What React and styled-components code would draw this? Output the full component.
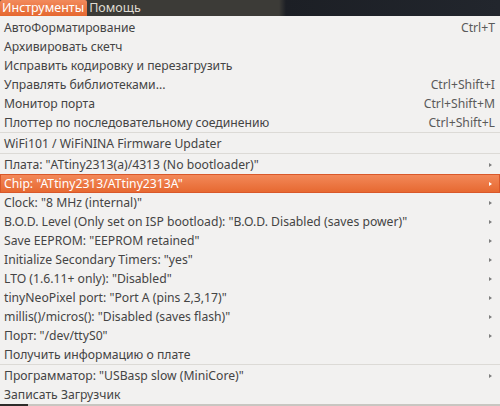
import styled, { createGlobalStyle } from "styled-components";

const GlobalStyle = createGlobalStyle`
  html, body {
    margin: 0;
    padding: 0;
    background: #f2f1f0;
  }
  body {
    width: 500px;
    height: 406px;
    overflow: hidden;
    font-family: "Noto Sans", "Open Sans", sans-serif;
  }
`;

const Screen = styled.div`
  display: flex;
  flex-direction: column;
  width: 500px;
  height: 406px;
`;

const MenuBar = styled.div`
  display: flex;
  height: 16px;
  background: linear-gradient(to right, #3c3b37 0, #3c3b37 279px, #1c1f25 286px, #22262d 100%);
  font-size: 12.5px;
  line-height: 16px;
`;

const BarItem = styled.div`
  padding: 0 3px 0 2px;
  color: ${(p) => (p.$active ? "#ffffff" : "#dfdbd2")};
  background: ${(p) =>
    p.$active ? "linear-gradient(#f28a5c, #e5672f)" : "transparent"};
  border-radius: ${(p) => (p.$active ? "2px 2px 0 0" : "0")};
`;

const Menu = styled.div`
  flex: 1;
  display: flex;
  flex-direction: column;
  padding-top: 2px;
  background: #f2f1f0;
  color: #444444;
  font-size: 12.2px;
`;

const Row = styled.div`
  display: flex;
  align-items: center;
  height: 19px;
  padding: 0 5px 0 4px;
  box-sizing: border-box;
  color: ${(p) => (p.$active ? "#ffffff" : "#444444")};
  background: ${(p) =>
    p.$active ? "linear-gradient(#f38a5b, #e6672f)" : "transparent"};
  box-shadow: ${(p) => (p.$active ? "inset 0 0 0 1px #d9582a" : "none")};
  white-space: nowrap;
`;

const Label = styled.span`
  flex: 1;
`;

const Shortcut = styled.span`
  color: #5a5a5a;
`;

const Arrow = styled.span`
  width: 0;
  height: 0;
  margin-right: 3px;
  border-top: 2.5px solid transparent;
  border-bottom: 2.5px solid transparent;
  border-left: 3px solid ${(p) => (p.$active ? "#ffffff" : "#7d7d7d")};
`;

const Separator = styled.div`
  height: 2px;
  border-top: 1px solid #dcdad6;
  box-sizing: border-box;
`;

const BottomEdge = styled.div`
  height: 2px;
  background: linear-gradient(to right, #2d2c2a 0, #2d2c2a 28px, #c8c6c1 28px);
`;

const groups = [
  [
    { label: "АвтоФорматирование", key: "Ctrl+T" },
    { label: "Архивировать скетч" },
    { label: "Исправить кодировку и перезагрузить" },
    { label: "Управлять библиотеками...", key: "Ctrl+Shift+I" },
    { label: "Монитор порта", key: "Ctrl+Shift+M" },
    { label: "Плоттер по последовательному соединению", key: "Ctrl+Shift+L" },
  ],
  [{ label: "WiFi101 / WiFiNINA Firmware Updater" }],
  [
    { label: 'Плата: "ATtiny2313(a)/4313 (No bootloader)"', sub: true },
    { label: 'Chip: "ATtiny2313/ATtiny2313A"', sub: true, active: true },
    { label: 'Clock: "8 MHz (internal)"', sub: true },
    { label: 'B.O.D. Level (Only set on ISP bootload): "B.O.D. Disabled (saves power)"', sub: true },
    { label: 'Save EEPROM: "EEPROM retained"', sub: true },
    { label: 'Initialize Secondary Timers: "yes"', sub: true },
    { label: 'LTO (1.6.11+ only): "Disabled"', sub: true },
    { label: 'tinyNeoPixel port: "Port A (pins 2,3,17)"', sub: true },
    { label: 'millis()/micros(): "Disabled (saves flash)"', sub: true },
    { label: 'Порт: "/dev/ttyS0"', sub: true },
    { label: "Получить информацию о плате" },
  ],
  [
    { label: 'Программатор: "USBasp slow (MiniCore)"', sub: true },
    { label: "Записать Загрузчик" },
  ],
];

export default function App() {
  return (
    <Screen>
      <GlobalStyle />
      <MenuBar>
        <BarItem $active>Инструменты</BarItem>
        <BarItem>Помощь</BarItem>
      </MenuBar>
      <Menu>
        {groups.map((items, gi) => (
          <div key={gi}>
            {gi > 0 && <Separator />}
            {items.map((it) => (
              <Row key={it.label} $active={it.active}>
                <Label>{it.label}</Label>
                {it.key && <Shortcut>{it.key}</Shortcut>}
                {it.sub && <Arrow $active={it.active} />}
              </Row>
            ))}
          </div>
        ))}
      </Menu>
      <BottomEdge />
    </Screen>
  );
}
